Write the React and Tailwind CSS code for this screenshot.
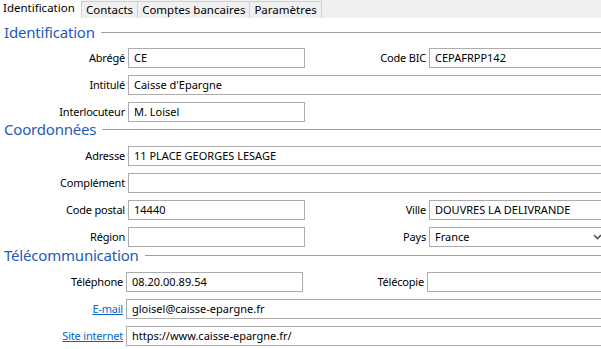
import React from "react";

const box = "h-[20px] border border-[#acacac] bg-white flex items-center pl-[5px] text-[11px] text-black whitespace-nowrap overflow-hidden";

function Heading({ title, className = "" }) {
    return (
        <div className={`flex items-center h-[20px] pl-[4px] ${className}`}>
            <span className="text-[15px] leading-[20px] tracking-[-0.2px] text-[#1f5bb5]">{title}</span>
            <div className="flex-1 h-px bg-[#a0a0a0] ml-[6px]" />
        </div>
    );
}

function Label({ children, width, link }) {
    return (
        <div className={`${width} shrink-0 text-right text-[11px] tracking-[-0.2px] whitespace-nowrap`}>
            {link ? <span className="text-[#0066cc] underline">{children}</span> : children}
        </div>
    );
}

// Row with one or two fields; a wide field spans to the right edge
function Row({ label, value, right, rightValue, wide, lw = "w-[125px]", rw = "w-[121px]", gap = "ml-[3px]", focus, link, select }) {
    return (
        <div className="flex items-center h-[20px]">
            <Label width={lw} link={link}>{label}</Label>
            {wide ? (
                <div className={`${box} ${gap} flex-1 ${focus ? "border-[#5b9de1]" : ""}`}>{value}</div>
            ) : (
                <>
                    <div className={`${box} ${gap} w-[177px] shrink-0`}>{value}</div>
                    {right && (
                        <>
                            <Label width={rw}>{right}</Label>
                            <div className={`${box} ${gap} flex-1 relative`}>
                                {rightValue}
                                {select && (
                                    <svg className="absolute left-[163px] top-[6px]" width="9" height="6" viewBox="0 0 9 6">
                                        <path d="M1 1 L4.5 4.5 L8 1" fill="none" stroke="#555" strokeWidth="1.6" />
                                    </svg>
                                )}
                            </div>
                        </>
                    )}
                </>
            )}
        </div>
    );
}

function Tabs() {
    const tabs = ["Contacts", "Comptes bancaires", "Paramètres"];
    return (
        <div className="flex h-[18px] bg-[#f0f0f0] text-[11.5px]">
            <div className="w-[81px] h-[18px] bg-white pl-[3px] leading-[14px] pt-px">Identification</div>
            <div className="flex pt-px">
                {tabs.map((t) => (
                    <div key={t} className="h-[17px] border-t border-r border-[#d0d0d0] first:border-l px-[4px] leading-[15px] bg-[#f0f0f0]">
                        {t}
                    </div>
                ))}
            </div>
        </div>
    );
}

export default function App() {
    return (
        <div className="w-[601px] h-[349px] overflow-hidden bg-white text-black" style={{ fontFamily: '"Noto Sans", sans-serif' }}>
            <div className="w-[640px]">
                <Tabs />
                <Heading title="Identification" className="mt-[4px] w-[601px]" />
                <div className="flex flex-col gap-[7px] mt-[6px]">
                    <Row label="Abrégé" value="CE" right="Code BIC" rightValue="CEPAFRPP142" />
                    <Row label="Intitulé" value="Caisse d'Epargne" wide />
                    <Row label="Interlocuteur" value="M. Loisel" />
                </div>
                <Heading title="Coordonnées" className="mt-[-3px] w-[601px]" />
                <div className="flex flex-col gap-[7px] mt-[7px]">
                    <Row label="Adresse" value="11 PLACE GEORGES LESAGE" wide />
                    <Row label="Complément" value="" wide />
                    <Row label="Code postal" value="14440" right="Ville" rightValue="DOUVRES LA DELIVRANDE" />
                    <Row label="Région" value="" right="Pays" rightValue="France" select />
                </div>
                <Heading title="Télécommunication" className="mt-[-2px] w-[601px]" />
                <div className="flex flex-col gap-[7px] mt-[7px]">
                    <Row label="Téléphone" value="08.20.00.89.54" right="Télécopie" rightValue="" lw="w-[123px]" rw="w-[121px]" />
                    <Row label="E-mail" value="gloisel@caisse-epargne.fr" wide lw="w-[123px]" focus link />
                    <Row label="Site internet" value="https://www.caisse-epargne.fr/" wide lw="w-[123px]" link />
                </div>
            </div>
        </div>
    );
}
